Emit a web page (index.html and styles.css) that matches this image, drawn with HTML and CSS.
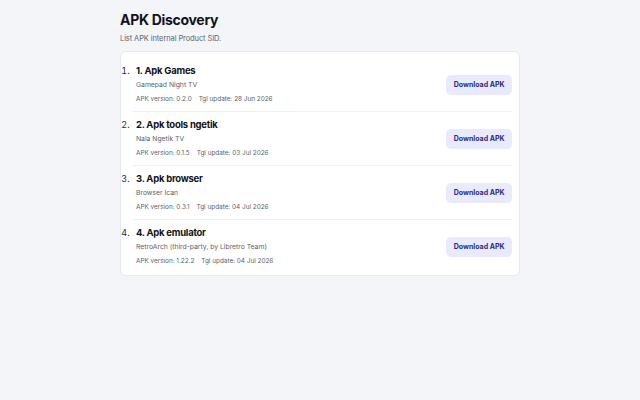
FILE: index.html
```html
<!DOCTYPE html>
<html lang="id">

<head>
    <meta charset="UTF-8">
    <title>APK Discovery</title>

    <link rel="stylesheet" href="styles.css">
</head>

<body>
    <main class="wrap">
        <h1>APK Discovery</h1>
        <p class="lead">List APK internal Product SID.</p>

        <ol class="apk-list">
            <li class="apk">
                <div class="row">
                    <div class="info">
                        <h2>1. Apk Games</h2>
                        <p class="desc">Gamepad Night TV</p>
                        <p class="meta"><span>APK version: 0.2.0</span><span>Tgl update: 28 Jun 2026</span></p>
                    </div>
                    <a class="btn" href="#">Download APK</a>
                </div>
            </li>
            <li class="apk">
                <div class="row">
                    <div class="info">
                        <h2>2. Apk tools ngetik</h2>
                        <p class="desc">Nala Ngetik TV</p>
                        <p class="meta"><span>APK version: 0.1.5</span><span>Tgl update: 03 Jul 2026</span></p>
                    </div>
                    <a class="btn" href="#">Download APK</a>
                </div>
            </li>
            <li class="apk">
                <div class="row">
                    <div class="info">
                        <h2>3. Apk browser</h2>
                        <p class="desc">Browser Ican</p>
                        <p class="meta"><span>APK version: 0.3.1</span><span>Tgl update: 04 Jul 2026</span></p>
                    </div>
                    <a class="btn" href="#">Download APK</a>
                </div>
            </li>
            <li class="apk">
                <div class="row">
                    <div class="info">
                        <h2>4. Apk emulator</h2>
                        <p class="desc">RetroArch (third-party, by Libretro Team)</p>
                        <p class="meta"><span>APK version: 1.22.2</span><span>Tgl update: 04 Jul 2026</span></p>
                    </div>
                    <a class="btn" href="#">Download APK</a>
                </div>
            </li>
        </ol>
    </main>
</body>

</html>
```

FILE: styles.css
```css
body {
    margin: 0;
    background: #f4f5f9;
    font-family: Inter, "Noto Sans", sans-serif;
    color: #111318;
}

.wrap {
    width: 400px;
    margin: 0 auto;
    padding-top: 11px;
}

h1 {
    margin: 0;
    font-size: 14px;
    font-weight: 700;
    line-height: 18px;
    letter-spacing: -0.3px;
}

.lead {
    margin: 5px 0 0;
    font-size: 7.5px;
    line-height: 10px;
    letter-spacing: -0.1px;
    color: #5f6472;
}

.apk-list {
    margin: 7px 0 0;
    padding: 6px 7px 2px 11px;
    background: #fff;
    border: 1px solid #e8eaf0;
    border-radius: 6px;
    font-size: 9px;
}

.apk {
    padding: 6px 0 5px 4px;
    border-bottom: 1px solid #eef0f3;
}

.apk:last-child {
    border-bottom: none;
}

.apk::marker {
    font-size: 9px;
    color: #2a2d35;
}

.row {
    display: flex;
    align-items: center;
    justify-content: space-between;
}

h2 {
    margin: 0;
    font-size: 9.5px;
    font-weight: 700;
    line-height: 14px;
    letter-spacing: -0.25px;
}

.desc {
    margin: 0;
    font-size: 6.8px;
    line-height: 14px;
    color: #5a5f6b;
}

.meta {
    margin: 0;
    font-size: 6.4px;
    line-height: 14px;
    color: #5a5f6b;
}

.meta span+span {
    margin-left: 7px;
}

.btn {
    padding: 5px 7.5px;
    background: #e9eafc;
    border-radius: 5px;
    color: #252a8c;
    font-size: 7px;
    font-weight: 700;
    line-height: 10px;
    text-decoration: none;
}
```
